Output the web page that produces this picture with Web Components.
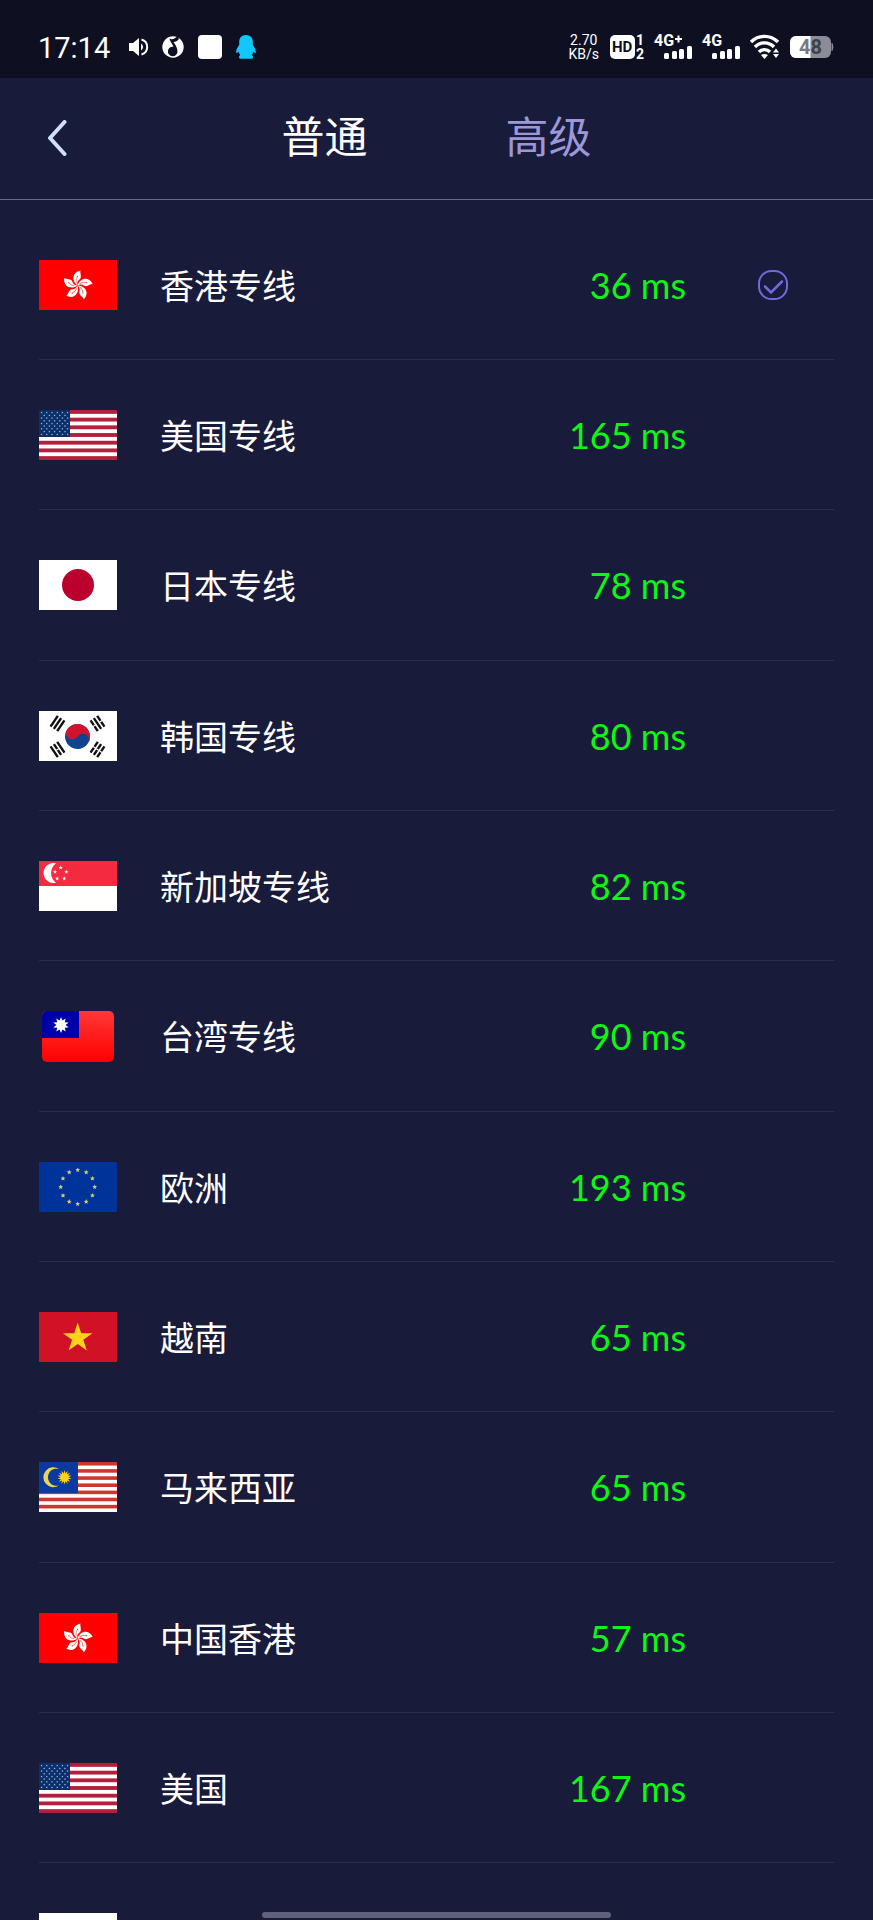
<!DOCTYPE html>
<html lang="zh-CN">
<head>
<meta charset="utf-8">
<meta name="viewport" content="width=device-width, initial-scale=1">
<title>线路选择</title>
<style>
html, body { margin: 0; height: 100%; background: #191b3b; }
body { font-family: Lato, "Noto Sans CJK SC", sans-serif; color: #fff; }
</style>
</head>
<body>
<node-app></node-app>
<script>
const star = (cx, cy, r, n = 5, inner = 0.382, turn = 0) => {
  const pts = [];
  for (let i = 0; i < n * 2; i++) {
    const a = (i * Math.PI) / n - Math.PI / 2 + turn, q = i % 2 ? r * inner : r;
    pts.push((cx + q * Math.cos(a)).toFixed(2) + ',' + (cy + q * Math.sin(a)).toFixed(2));
  }
  return `<polygon points="${pts.join(' ')}"/>`;
};
const stripes = (n, color) => {
  let out = '<rect width="78" height="50" fill="#fff"/>';
  for (let i = 0; i < n; i += 2)
    out += `<rect y="${(i * 50 / n).toFixed(2)}" width="78" height="${(50 / n).toFixed(2)}" fill="${color}"/>`;
  return out;
};
const FLAGS = {
  hk() {
    let p = '';
    for (let i = 0; i < 5; i++)
      p += `<g transform="rotate(${i * 72} 38.500 25.500)"><path fill="#fff" d="M38.500 25.500C32.500 21 32.500 12.500 41.500 10.500C40.500 13 43.500 17 40.500 19.500C38.500 21 37.800 23 38.500 25.500Z"/><path d="M37.600 22.500C36.800 20.500 37 18.500 38.300 17" fill="none" stroke="#f00" stroke-width=".5"/><circle cx="38.400" cy="16.300" r=".6" fill="#f00"/></g>`;
    return '<rect width="78" height="50" fill="#f00"/>' + p;
  },
  us() {
    let s = '';
    for (let r = 0; r < 9; r++)
      for (let c = 0; c < (r % 2 ? 5 : 6); c++)
        s += star((r % 2 ? 5.2 : 2.6) + c * 5.2, 2.7 + r * 2.7, 1.1);
    return stripes(13, '#b31f3c') + `<rect width="31" height="27" fill="#0a2f6b"/><g fill="#b9d3ee">${s}</g>`;
  },
  jp: () => '<rect width="78" height="50" fill="#fff"/><circle cx="39" cy="25" r="16" fill="#bc002d"/>',
  kr() {
    const tri = (x, y, a, gaps) => {
      let b = '';
      [-4, 0, 4].forEach((o, i) => {
        b += `<rect x="-6.500" y="${o - 1.2}" width="13" height="2.400" fill="#111"/>`;
        if (gaps[i]) b += `<rect x="-.6" y="${o - 1.4}" width="1.200" height="2.800" fill="#fff"/>`;
      });
      return `<g transform="translate(${x} ${y}) rotate(${a})">${b}</g>`;
    };
    return `<rect width="78" height="50" fill="#fff"/>
      <g transform="rotate(33 38.500 25.500)"><circle cx="38.500" cy="25.500" r="12.500" fill="#0f4392"/>
      <path fill="#cf142b" d="M26 25.500a12.500 12.500 0 0 1 25 0a6.250 6.250 0 0 0-12.500 0a6.250 6.250 0 0 1-12.500 0Z"/></g>`
      + tri(18.5, 12.5, -56, [0, 0, 0]) + tri(58.5, 12.5, 56, [1, 0, 1]) + tri(18.5, 38.5, 56, [0, 1, 0]) + tri(58.5, 38.5, -56, [1, 1, 1]);
  },
  sg() {
    let s = '';
    for (let i = 0; i < 5; i++) {
      const a = i * Math.PI * 0.4 - Math.PI / 2;
      s += star(21.7 + 6 * Math.cos(a), 12.7 + 6 * Math.sin(a), 2.3);
    }
    return `<rect width="78" height="50" fill="#fff"/><rect width="78" height="25" fill="#f42a41"/><path fill="#fff" d="M17 2.300A10 10 0 1 0 17 21.700A12 12 0 0 1 17 2.300Z"/><g fill="#fff">${s}</g>`;
  },
  tw: () => `<defs><linearGradient id="red" x2="0" y2="1"><stop stop-color="#ff3838"/><stop offset="1" stop-color="#f00"/></linearGradient><clipPath id="card"><rect x="3" width="72" height="51" rx="5"/></clipPath></defs>
    <g clip-path="url(#card)"><rect width="78" height="51" fill="url(#red)"/><rect width="40" height="27" fill="#0000a8"/><g fill="#fff">${star(22, 14, 8, 10, 0.58)}</g></g>`,
  eu() {
    let s = '';
    for (let i = 0; i < 12; i++) {
      const a = i * Math.PI / 6;
      s += star(38.7 + 17 * Math.cos(a), 25 + 17 * Math.sin(a), 2.6, 5, 0.45);
    }
    return `<rect width="78" height="50" fill="#039"/><g fill="#c9cf6a">${s}</g>`;
  },
  vn: () => `<rect width="78" height="50" fill="#d01126"/><g fill="#ffd21c">${star(38.7, 26, 15.5)}</g>`,
  my: () => stripes(14, '#d0352f') + `<rect width="39" height="31" fill="#0a3a9e"/><path fill="#e8d458" d="M20 7A10 10 0 1 0 20 23.500A8.600 8.600 0 1 1 20 7Z"/><g fill="#ffd21c">${star(25.5, 15.3, 7.2, 14, 0.55)}</g>`
};

class NodeFlag extends HTMLElement {
  connectedCallback() {
    this.attachShadow({ mode: 'open' }).innerHTML = `
      <style>:host{display:block;width:78px;height:50px}svg{display:block;overflow:visible}</style>
      <svg width="78" height="50" viewBox="0 0 78 50" aria-hidden="true">${FLAGS[this.getAttribute('code')]()}</svg>`;
  }
}
customElements.define('node-flag', NodeFlag);

class StatusBar extends HTMLElement {
  connectedCallback() {
    const bars = `<rect x="10" y="19" width="5" height="6" rx="1.500"/><rect x="18" y="17" width="5" height="8" rx="1.500"/><rect x="25" y="15" width="5" height="10" rx="1.500"/><rect x="33" y="12" width="5" height="13" rx="1.500"/>`;
    this.attachShadow({ mode: 'open' }).innerHTML = `
      <style>
      :host{display:flex;align-items:center;justify-content:space-between;box-sizing:border-box;height:78px;padding:16px 39px 0 38px;background:#0e1022;font-family:Roboto,sans-serif;flex:none}
      .side{display:flex;align-items:center}
      time{font-size:29px;line-height:36px;padding-top:2px;margin-right:18px}
      .left svg{margin-right:14px}
      svg{display:block;fill:#fff;flex:none;overflow:visible}
      .rate{font-size:14px;line-height:14px;text-align:center;margin-right:11px}
      .rate span{display:block}
      .right svg{margin-right:10px}
      .right svg:last-child{margin-right:0}
      text{font-weight:700}
      </style>
      <div class="side left">
        <time>17:14</time>
        <svg width="20" height="20" viewBox="0 0 20 20"><path d="M1 6h4l6-5v18l-6-5H1z"/><path d="M13 6.500a4 4 0 0 1 0 7z"/><path d="M13.500 2.500a7.800 7.800 0 0 1 0 15" stroke="#fff" stroke-width="2" fill="none"/></svg>
        <svg width="22" height="22" viewBox="0 0 22 22"><circle cx="11" cy="11" r="10.700"/><path fill="#0e1022" d="M7.500 2.500C10 4 13 3 15.500 0l1.500 3c-1.500 2-3.500 3-5.500 3 2 3 4 6 4 9.500a4.800 4.800 0 1 1-4-4.800C10.500 8 8 5.500 7.500 2.500Z"/></svg>
        <svg width="24" height="24" viewBox="0 0 24 24"><rect width="24" height="24" rx="4"/></svg>
        <svg width="20" height="24" viewBox="0 0 20 24"><path fill="#12c8fa" d="M10 0C5.500 0 3.200 3 3.200 7v3C1.500 12 0 15 .2 17.500c.2 1 1 .8 2.300-1 .4 1.500 1 2.500 1.800 3.400C2.600 21 2.500 23 4 23.800h12c1.500-.8 1.400-2.800-.3-3.900.8-.9 1.400-1.900 1.800-3.400 1.300 1.800 2.100 2 2.300 1C20 15 18.500 12 16.800 10V7c0-4-2.300-7-6.800-7Z"/></svg>
      </div>
      <div class="side right">
        <div class="rate"><span>2.70</span><span>KB/s</span></div>
        <svg width="34" height="34" viewBox="0 -4 34 34"><rect y="1" width="25" height="24" rx="5"/><text x="2" y="18" font-size="15" fill="#0e1022">HD</text><text x="26" y="11" font-size="14">1</text><text x="26" y="25" font-size="14">2</text></svg>
        <svg width="38" height="34" viewBox="0 -4 38 34"><text y="12" font-size="16">4G</text><path d="M21 5h7M24.500 1.500v7" stroke="#fff" stroke-width="2"/>${bars}</svg>
        <svg width="38" height="34" viewBox="0 -4 38 34"><text y="12" font-size="16">4G</text>${bars}</svg>
        <svg width="30" height="24" viewBox="0 0 30 24"><g fill="none" stroke="#fff" stroke-width="3.400"><path d="M1 7a19 19 0 0 1 27 0M5 12a13 13 0 0 1 19 0M9 17a7.500 7.500 0 0 1 11 0"/></g><path d="M11 20q3.500-2 7 0l-3.500 4zM23 17.500l3-4 3 4zM23 19l3 4 3-4z"/></svg>
        <svg width="44" height="22" viewBox="0 0 44 22"><rect width="41" height="22" rx="6" fill="#8b8c95"/><path d="M42 7.500q2 3.500 0 7z" fill="#8b8c95" stroke="#8b8c95"/><path d="M6 0h14.500v22H6a6 6 0 0 1-6-6V6a6 6 0 0 1 6-6Z"/><text x="9" y="18" font-size="20"><tspan fill="#777882">4</tspan><tspan fill="#3f404d">8</tspan></text></svg>
      </div>`;
  }
}
customElements.define('status-bar', StatusBar);

class TabHeader extends HTMLElement {
  connectedCallback() {
    this.attachShadow({ mode: 'open' }).innerHTML = `
      <style>
      :host{display:grid;grid-template-columns:1fr auto 1fr;align-items:center;box-sizing:border-box;height:122px;padding:0 39px 2px;border-bottom:1px solid #66679a;flex:none}
      button{font:inherit;color:inherit;background:none;border:0;padding:0;cursor:pointer}
      .back{justify-self:start;width:36px;height:48px}
      svg{display:block;margin:0 auto}
      nav{display:flex;gap:138px;padding-bottom:2px}
      nav button{font-size:43px;line-height:60px;color:#9c98d8}
      nav button[aria-selected=true]{color:#fff}
      </style>
      <button class="back" aria-label="返回"><svg width="20" height="36" viewBox="0 0 20 36"><path d="M17.500 2L3 18l14.500 16" fill="none" stroke="#cfe0fb" stroke-width="4" stroke-linecap="round" stroke-linejoin="round"/></svg></button>
      <nav role="tablist"><button role="tab" aria-selected="true">普通</button><button role="tab" aria-selected="false">高级</button></nav>`;
  }
}
customElements.define('tab-header', TabHeader);

class NodeRow extends HTMLElement {
  connectedCallback() {
    const ms = this.getAttribute('ms');
    this.attachShadow({ mode: 'open' }).innerHTML = `
      <style>
      :host{display:block;box-sizing:border-box;height:150px;border-bottom:1px solid #2b2d50}
      button{display:flex;align-items:center;width:100%;height:100%;padding:0 46px 0 0;border:0;background:none;color:inherit;font:inherit;text-align:left;cursor:pointer}
      .name{flex:1;margin-left:43px;padding-top:2px;font-size:34px;line-height:48px}
      .ms{margin-right:72px;font-size:36px;line-height:48px;color:#0cf814}
      .mark{width:30px;height:30px}
      svg{display:block}
      </style>
      <button><node-flag code="${this.getAttribute('flag')}"></node-flag>
      <span class="name"><slot></slot></span>
      ${ms ? `<span class="ms">${ms} ms</span>` : ''}
      <span class="mark">${this.hasAttribute('selected') ? '<svg width="30" height="30" viewBox="0 0 30 30" fill="none" stroke="#7468dc" stroke-width="2"><rect x="1" y="1" width="28" height="28" rx="12.500"/><path d="M7 16.500l6 6 11-11" stroke-width="2.500" stroke-linecap="round"/></svg>' : ''}</span></button>`;
  }
}
customElements.define('node-row', NodeRow);

class NodeApp extends HTMLElement {
  connectedCallback() {
    this.attachShadow({ mode: 'open' }).innerHTML = `
      <style>
      :host{display:flex;flex-direction:column;height:100vh;overflow:hidden}
      main{flex:1;min-height:0;overflow-y:auto;scrollbar-width:none;padding:10px 39px 0}
      node-row:nth-child(3n){height:151px}
      .home{position:fixed;left:30%;width:40%;bottom:2px;height:6px;border-radius:3px;background:#616279}
      </style>
      <status-bar></status-bar>
      <tab-header></tab-header>
      <main>
        <node-row flag="hk" ms="36" selected>香港专线</node-row>
        <node-row flag="us" ms="165">美国专线</node-row>
        <node-row flag="jp" ms="78">日本专线</node-row>
        <node-row flag="kr" ms="80">韩国专线</node-row>
        <node-row flag="sg" ms="82">新加坡专线</node-row>
        <node-row flag="tw" ms="90">台湾专线</node-row>
        <node-row flag="eu" ms="193">欧洲</node-row>
        <node-row flag="vn" ms="65">越南</node-row>
        <node-row flag="my" ms="65">马来西亚</node-row>
        <node-row flag="hk" ms="57">中国香港</node-row>
        <node-row flag="us" ms="167">美国</node-row>
        <node-row flag="jp"></node-row>
      </main>
      <div class="home"></div>`;
  }
}
customElements.define('node-app', NodeApp);
</script>
</body>
</html>
